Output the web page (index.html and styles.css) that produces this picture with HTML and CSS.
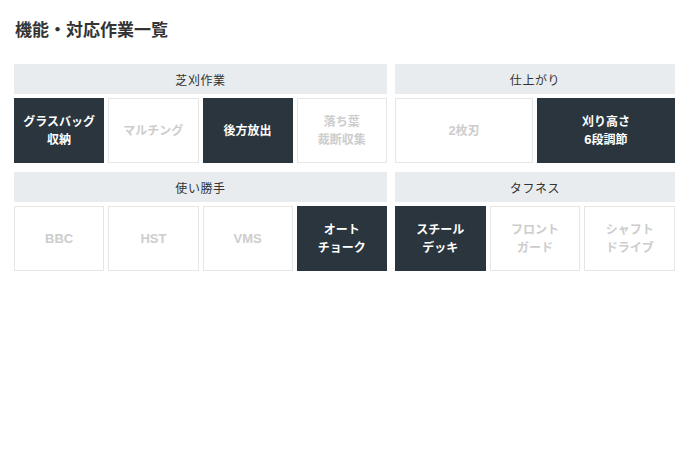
FILE: index.html
```html
<!DOCTYPE html>
<html lang="ja">
<head>
<meta charset="utf-8">
<title>機能・対応作業一覧</title>
<link rel="stylesheet" href="styles.css">
</head>
<body>
<div class="page">
  <h2 class="title">機能・対応作業一覧</h2>
  <div class="grid">
    <section class="group">
      <div class="group-head">芝刈作業</div>
      <div class="cells cells-4">
        <div class="cell on">グラスバッグ<br>収納</div>
        <div class="cell">マルチング</div>
        <div class="cell on">後方放出</div>
        <div class="cell">落ち葉<br>裁断収集</div>
      </div>
    </section>
    <section class="group">
      <div class="group-head">仕上がり</div>
      <div class="cells cells-2">
        <div class="cell"><span class="lat">2</span>枚刃</div>
        <div class="cell on">刈り高さ<br><span class="lat">6</span>段調節</div>
      </div>
    </section>
    <section class="group">
      <div class="group-head">使い勝手</div>
      <div class="cells cells-4">
        <div class="cell lat">BBC</div>
        <div class="cell lat">HST</div>
        <div class="cell lat">VMS</div>
        <div class="cell on">オート<br>チョーク</div>
      </div>
    </section>
    <section class="group">
      <div class="group-head">タフネス</div>
      <div class="cells cells-3">
        <div class="cell on">スチール<br>デッキ</div>
        <div class="cell">フロント<br>ガード</div>
        <div class="cell">シャフト<br>ドライブ</div>
      </div>
    </section>
  </div>
</div>
</body>
</html>
```

FILE: styles.css
```css
* { box-sizing: border-box; }
html, body { margin: 0; padding: 0; background: #fff; }
body {
  font-family: "Liberation Sans", "Noto Sans CJK JP", sans-serif;
  color: #333;
}
.page {
  padding: 19px 15px 0 14px;
  width: 690px;
}
.title {
  margin: 0 0 0 1px;
  font-size: 17px;
  line-height: 24px;
  font-weight: 700;
  color: #333;
}
.grid {
  margin-top: 21px;
  display: grid;
  grid-template-columns: 373fr 280fr;
  column-gap: 8px;
  row-gap: 9px;
}
.group {
  display: flex;
  flex-direction: column;
  gap: 4px;
}
.group-head {
  height: 30px;
  background: #e9ecef;
  display: flex;
  align-items: center;
  justify-content: center;
  font-size: 12px;
  font-weight: 400;
  letter-spacing: 0.6px;
  color: #333;
}
.cells {
  display: grid;
  gap: 4px;
}
.cells-4 { grid-template-columns: repeat(4, 1fr); }
.cells-3 { grid-template-columns: repeat(3, 1fr); }
.cells-2 { grid-template-columns: repeat(2, 1fr); }
.cell {
  height: 65px;
  border: 1px solid #e6e6e6;
  background: #fff;
  color: #cdcdcd;
  display: flex;
  align-items: center;
  justify-content: center;
  text-align: center;
  font-size: 12px;
  font-weight: 700;
  line-height: 18px;
}
.cell span { display: contents; }
.lat { font-size: 13px; }
.cell .lat { font-size: 13px; }
.cell.on {
  background: #2a353e;
  border-color: #2a353e;
  color: #fff;
}
```
